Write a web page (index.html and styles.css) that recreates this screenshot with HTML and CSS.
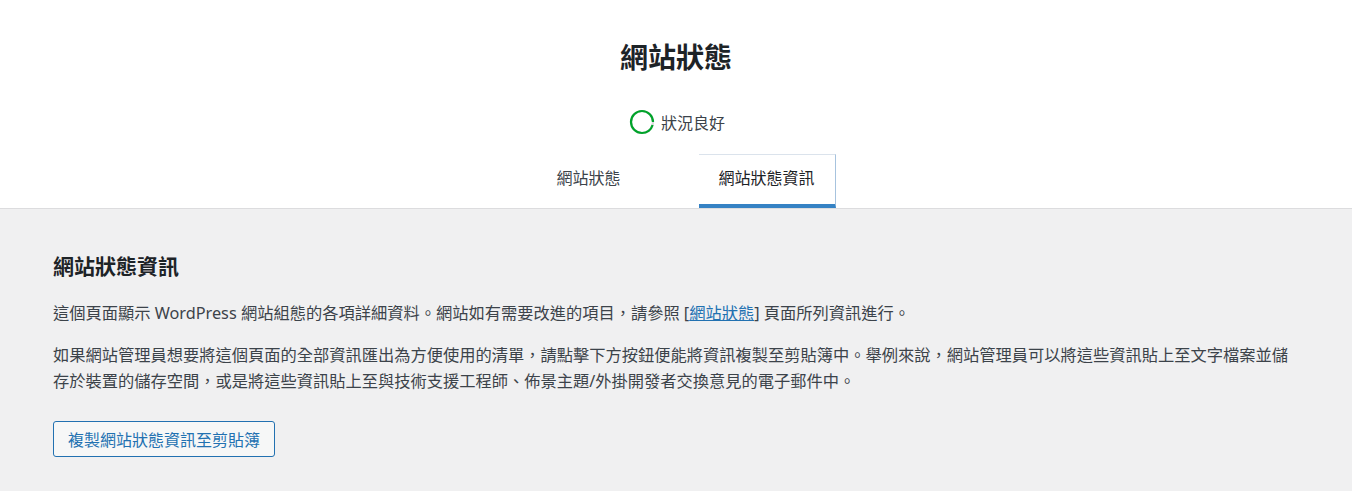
FILE: index.html
```html
<!DOCTYPE html>
<html lang="zh-Hant">
<head>
    <meta charset="UTF-8">
    <title>網站狀態資訊</title>
    <link rel="stylesheet" href="styles.css">
</head>
<body>
    <div class="health-header">
        <h1>網站狀態</h1>

        <div class="health-status">
            <svg class="health-progress" width="26" height="26" viewBox="0 0 26 26">
                <circle class="progress-track" cx="13" cy="13" r="11"></circle>
                <circle class="progress-bar" cx="13" cy="13" r="11"></circle>
            </svg>
            <span>狀況良好</span>
        </div>

        <nav class="health-tabs">
            <a href="#" class="tab">網站狀態</a>
            <a href="#" class="tab active">網站狀態資訊</a>
        </nav>
    </div>

    <div class="health-body">
        <h2>網站狀態資訊</h2>
        <p>這個頁面顯示 WordPress 網站組態的各項詳細資料。網站如有需要改進的項目，請參照 [<a href="#">網站狀態</a>] 頁面所列資訊進行。</p>
        <p>如果網站管理員想要將這個頁面的全部資訊匯出為方便使用的清單，請點擊下方按鈕便能將資訊複製至剪貼簿中。舉例來說，網站管理員可以將這些資訊貼上至文字檔案並儲存於裝置的儲存空間，或是將這些資訊貼上至與技術支援工程師、佈景主題/外掛開發者交換意見的電子郵件中。</p>
        <div class="copy-row">
            <button class="copy-btn">複製網站狀態資訊至剪貼簿</button>
        </div>
    </div>
</body>
</html>
```

FILE: styles.css
```css
* {
    margin: 0;
    padding: 0;
    box-sizing: border-box;
}

body {
    font-family: "Segoe UI", "Noto Sans", "Noto Sans CJK TC", sans-serif;
    background: #f0f0f1;
    color: #3c434a;
    font-size: 16.25px;
}

.health-header {
    background: #fff;
    border-bottom: 1px solid #dcdcde;
    text-align: center;
}

.health-header h1 {
    font-size: 28px;
    font-weight: 600;
    color: #1d2327;
    line-height: 40px;
    padding-top: 37px;
}

.health-status {
    display: flex;
    justify-content: center;
    align-items: center;
    gap: 6px;
    margin-top: 30px;
    height: 30px;
    font-size: 16px;
    color: #3c434a;
    padding-left: 2px;
}

.progress-track {
    fill: none;
    stroke: #dcdcde;
    stroke-width: 2.2;
}

.progress-bar {
    fill: none;
    stroke: #00a32a;
    stroke-width: 2.2;
    stroke-dasharray: 66.1 69.1;
    stroke-dashoffset: -3;
}

.health-tabs {
    display: flex;
    justify-content: center;
    gap: 57px;
    margin-top: 17px;
    padding-left: 20px;
}

.tab {
    display: block;
    height: 54px;
    line-height: 47px;
    padding: 0 20px;
    font-size: 16px;
    color: #3c434a;
    text-decoration: none;
    border-top: 1px solid transparent;
    border-right: 1px solid transparent;
    border-bottom: 4px solid transparent;
}

.tab.active {
    border-top-color: #dbe3ec;
    border-right-color: #a7c3de;
    border-bottom-color: #3582c4;
    color: #1d2327;
}

.health-body {
    padding: 43px 53px 0 53px;
}

.health-body h2 {
    font-size: 21px;
    font-weight: 600;
    color: #1d2327;
    line-height: 28px;
    margin-bottom: 20px;
}

.health-body p {
    line-height: 26px;
    margin-bottom: 16px;
}

.health-body p a {
    color: #2271b1;
}

.copy-row {
    padding-top: 11px;
}

.copy-btn {
    font-family: inherit;
    font-size: 16px;
    color: #2271b1;
    background: #f6f7f7;
    border: 1px solid #2271b1;
    border-radius: 3px;
    height: 36px;
    padding: 0 14px;
    cursor: pointer;
}
```
